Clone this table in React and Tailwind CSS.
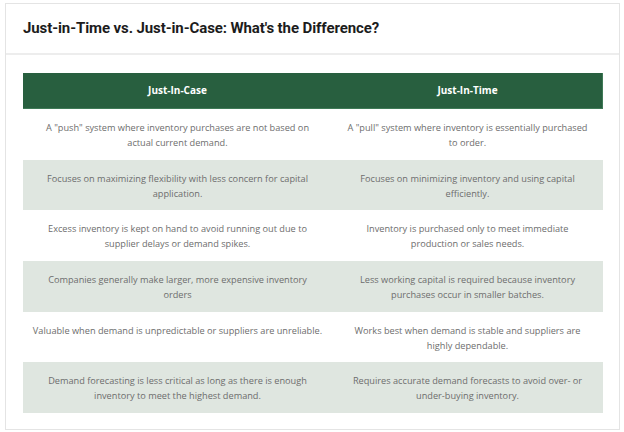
import React from "react";

// each cell keeps the reference's own line breaks
const rows = [
  [
    ['A "push" system where inventory purchases are not based on', "actual current demand."],
    ['A "pull" system where inventory is essentially purchased', "to order."],
  ],
  [
    ["Focuses on maximizing flexibility with less concern for capital", "application."],
    ["Focuses on minimizing inventory and using capital", "efficiently."],
  ],
  [
    ["Excess inventory is kept on hand to avoid running out due to", "supplier delays or demand spikes."],
    ["Inventory is purchased only to meet immediate", "production or sales needs."],
  ],
  [
    ["Companies generally make larger, more expensive inventory", "orders"],
    ["Less working capital is required because inventory", "purchases occur in smaller batches."],
  ],
  [
    ["Valuable when demand is unpredictable or suppliers are unreliable."],
    ["Works best when demand is stable and suppliers are", "highly dependable."],
  ],
  [
    ["Demand forecasting is less critical as long as there is enough", "inventory to meet the highest demand."],
    ["Requires accurate demand forecasts to avoid over- or", "under-buying inventory."],
  ],
];

const Cell = ({ lines }) => (
  <div className="pt-[11px] flex flex-col items-center whitespace-nowrap">
    {lines.map((l, j) => (
      <span key={j}>{l}</span>
    ))}
  </div>
);

const App = () => {
  return (
    <div className="w-[624px] h-[432px] bg-white pt-[3px] pl-[5px]">
      <div className="w-[615px] h-[427px] border border-[#e4e4e4] bg-white">
        {/* Title */}
        <div className="h-[51px] border-b-2 border-[#ededed] px-[17px] flex items-center">
          <h2 className="font-['Roboto',sans-serif] font-bold text-[15px] text-[#1c1c1c] tracking-[-0.1px]">
            Just-in-Time vs. Just-in-Case: What's the Difference?
          </h2>
        </div>

        {/* Table */}
        <div className="pt-[18px] px-[17px]">
          <div className="w-[580px] font-['Open_Sans',sans-serif]">
            <div className="grid grid-cols-[309px_271px] h-[36px] bg-[#285f3f] border-b border-r border-[#3f7a57] text-white text-[10px] font-bold">
              <div className="flex items-center justify-center">Just-In-Case</div>
              <div className="flex items-center justify-center">Just-In-Time</div>
            </div>
            {rows.map((r, i) => (
              <div
                key={i}
                className={
                  "grid grid-cols-[309px_271px] h-[50.67px] text-[9.2px] leading-[15px] text-[#6d6d6d] text-center " +
                  (i % 2 === 1 ? "bg-[#dfe6e0]" : "bg-white")
                }
              >
                <Cell lines={r[0]} />
                <Cell lines={r[1]} />
              </div>
            ))}
          </div>
        </div>
      </div>
    </div>
  );
};

export default App;
